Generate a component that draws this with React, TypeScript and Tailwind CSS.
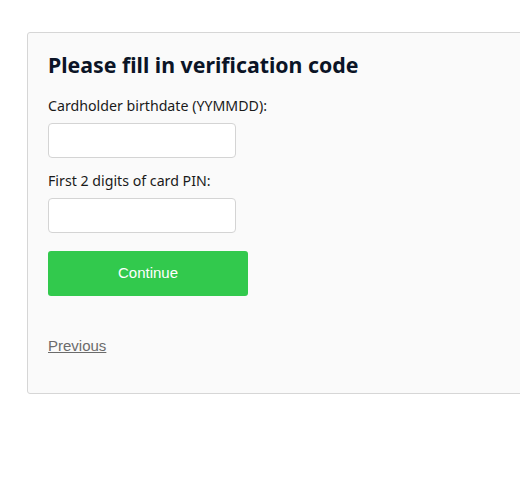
import React from 'react';

const App: React.FC = () => {
  return (
    <div className="w-[520px] h-[496px] bg-white pt-8 pl-[27px] overflow-hidden">
      <div className="w-[520px] h-[362px] bg-[#fafafa] border border-[#d6d6d6] rounded-[3px] px-5 pt-[17px] font-['Noto_Sans',sans-serif]">
        <h1 className="text-[21.3px] leading-[30px] font-bold text-[#0b1426]">Please fill in verification code</h1>

        <label className="block mt-[16px] text-[14.2px] leading-5 text-[#1a1a1a]">Cardholder birthdate (YYMMDD):</label>
        <input type="text" className="block mt-[7px] w-[188px] h-[35px] bg-white border border-[#d4d4d4] rounded-[4px]" />

        <label className="block mt-[13px] text-[14.2px] leading-5 text-[#1a1a1a]">First 2 digits of card PIN:</label>
        <input type="text" className="block mt-[7px] w-[188px] h-[35px] bg-white border border-[#d4d4d4] rounded-[4px]" />

        <button className="block mt-[18px] w-[200px] h-[45px] bg-[#32c94d] rounded-[3px] text-white text-[15px] font-['Liberation_Sans',Arial,sans-serif]">
          Continue
        </button>

        <a href="#" className="inline-block mt-[40px] text-[15px] leading-5 text-[#6b6b6b] underline font-['Liberation_Sans',Arial,sans-serif]">
          Previous
        </a>
      </div>
    </div>
  );
};

export default App;
